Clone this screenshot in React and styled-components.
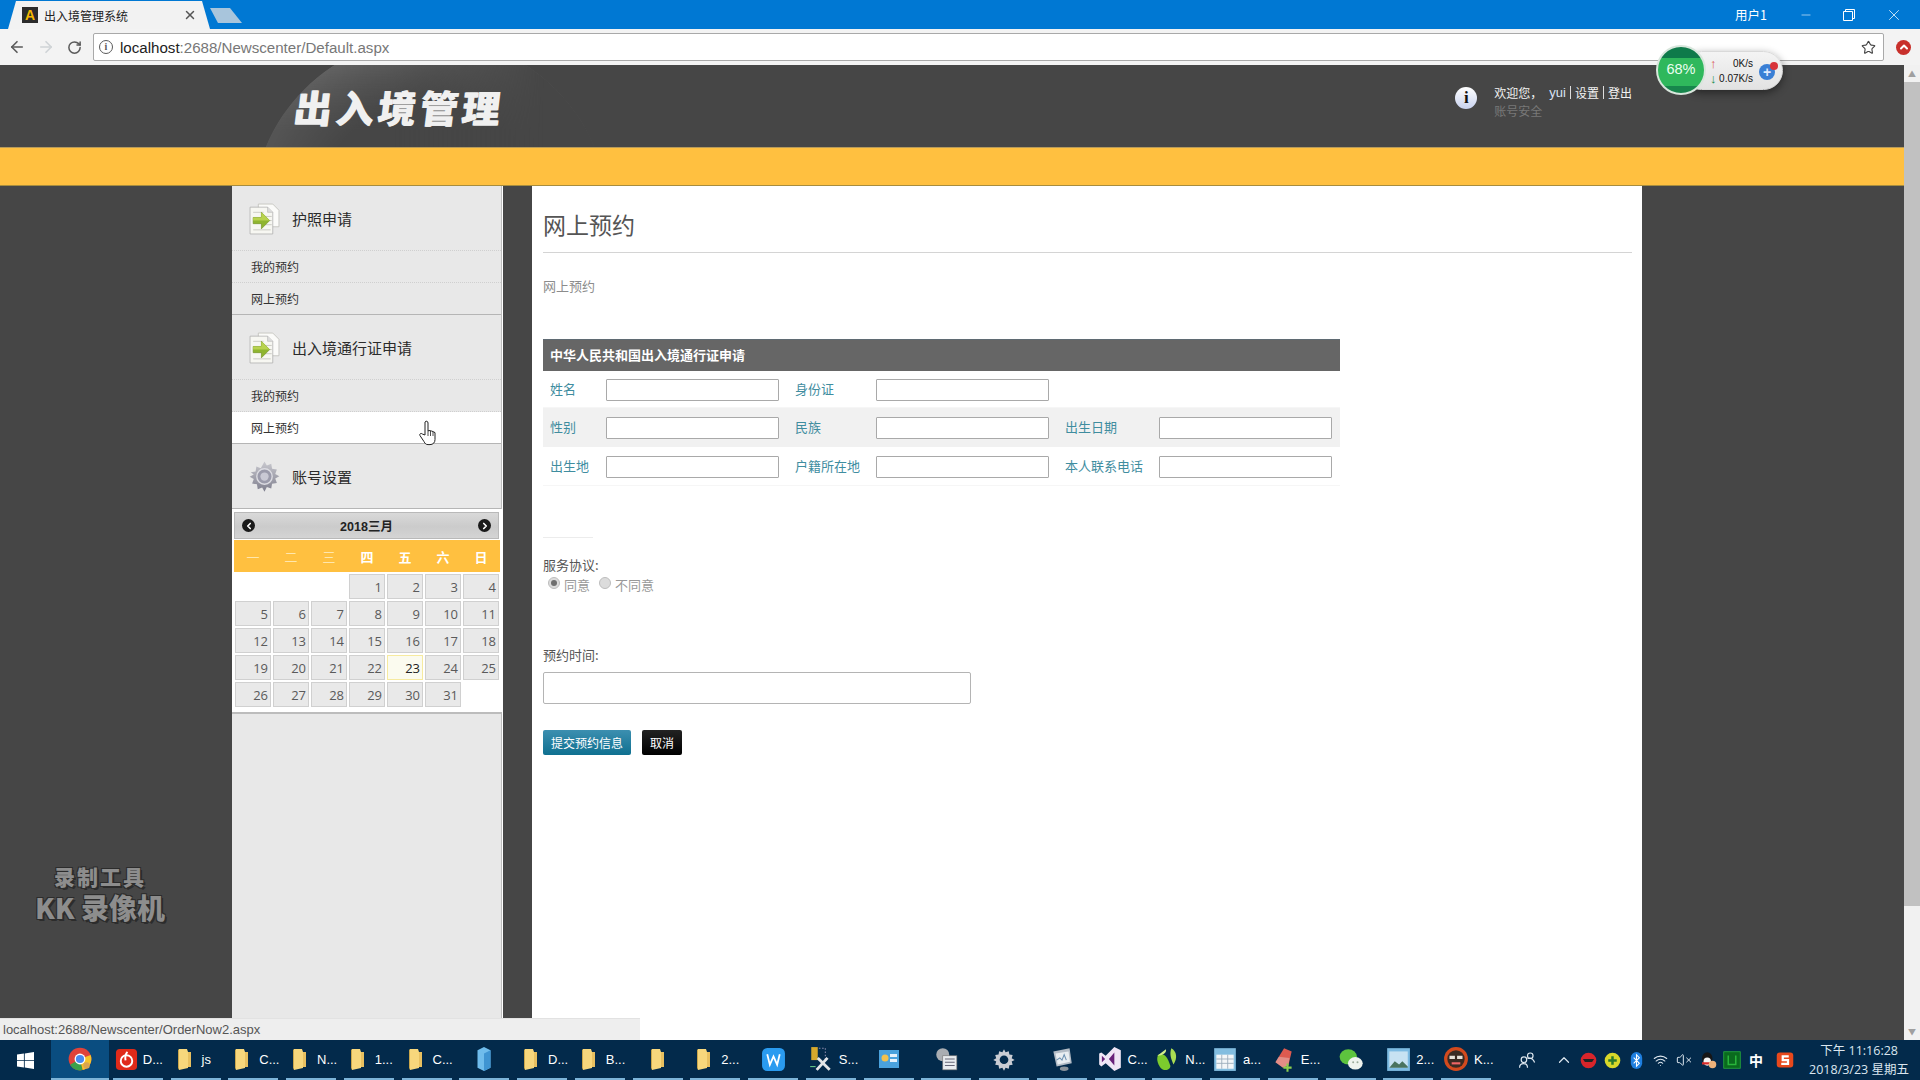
import React from "react";
import styled, { createGlobalStyle } from "styled-components";
import { ArrowLeft, ArrowRight, RotateCw, Star, X, Minus, ChevronUp, ChevronLeft, ChevronRight, Wifi, VolumeX } from "lucide-react";

const CJK = `"Noto Sans CJK SC", "Noto Sans", sans-serif`;
const LATIN = `"Open Sans", "Noto Sans CJK SC", sans-serif`;

const Global = createGlobalStyle`
  html, body { margin: 0; padding: 0; background: #464646; }
  * { box-sizing: border-box; }
  #root { width: 1920px; height: 1080px; overflow: hidden; }
`;

const Screen = styled.div`
  position: relative; width: 1920px; height: 1080px; display: flex; flex-direction: column;
  font-family: ${CJK}; overflow: hidden;
`;

/* ---------- browser chrome ---------- */
const TabStrip = styled.div`
  height: 29px; background: #0078d3; display: flex; align-items: flex-end; flex: none;
  padding-left: 8px; color: #fff;
`;
const Tab = styled.div`
  width: 202px; height: 28px; background: #f2f2f2; display: flex; align-items: center;
  clip-path: polygon(0 100%, 8px 0, 194px 0, 100% 100%); padding-left: 14px; color: #222; font-size: 12px;
`;
const Favicon = styled.span`
  width: 16px; height: 16px; background: #2b2b2b; color: #f5b800; font: bold 14px/16px "Liberation Sans", sans-serif;
  text-align: center; margin-right: 6px; flex: none;
`;
const TabTitle = styled.span` flex: 1; white-space: nowrap; `;
const TabClose = styled.span` display: flex; margin-right: 13px; color: #555; `;
const NewTab = styled.div`
  width: 32px; height: 15px; background: #a8c5dc; margin: 0 0 6px 0;
  clip-path: polygon(0 0, 20px 0, 100% 100%, 8px 100%); flex: none;
`;
const StripSpacer = styled.div` flex: 1; `;
const UserName = styled.span` font-size: 12.5px; align-self: center; margin-right: 32px; white-space: nowrap; `;
const WinBtns = styled.div` display: flex; align-self: center; gap: 29px; margin-right: 17px; align-items: center; `;
const RestoreIcon = styled.svg` width: 14px; height: 14px; fill: none; stroke: #fff; stroke-width: 1; `;

const Toolbar = styled.div`
  height: 36px; background: #f3f3f3; display: flex; align-items: center; flex: none; padding-left: 2px;
`;
const NavBtn = styled.span` width: 29px; display: flex; justify-content: center; color: ${p => p.$off ? "#cfd3d6" : "#5a5a5a"}; `;
const Omnibox = styled.div`
  margin-left: 4px; width: 1791px; height: 28px; background: #fff; border: 1px solid #a9a9a9; border-radius: 2px;
  display: flex; align-items: center; padding: 0 7px 0 1px; font: 15.1px "Liberation Sans", sans-serif; color: #777;
`;
const InfoDot = styled.span`
  width: 14px; height: 14px; border-radius: 50%; border: 1.6px solid #5a5a5a; color: #5a5a5a;
  font: bold 10px/11px "Liberation Serif", serif; text-align: center; margin: 0 7px 0 4px; flex: none;
`;
const Host = styled.span` color: #222; `;
const UrlGrow = styled.span` flex: 1; `;
const ExtBtn = styled.span`
  margin-left: 12px; width: 15px; height: 15px; border-radius: 50%; background: #c8302b; color: #fff;
  display: flex; align-items: center; justify-content: center; flex: none;
`;

/* ---------- page ---------- */
const Viewport = styled.div` flex: 1; display: flex; min-height: 0; `;
const PageCol = styled.div` flex: 1; display: flex; flex-direction: column; min-width: 0; background: #464646; `;

const SiteHeader = styled.header`
  position: relative; height: 82px; flex: none; background: #464646; overflow: hidden;
  display: flex; align-items: flex-start; padding-left: 294px;
  &::before {
    content: ""; position: absolute; left: 252px; top: -28px; width: 356px; height: 356px; border-radius: 50%;
    background: radial-gradient(circle closest-side, #464646 62%, #686868 100%);
    -webkit-mask-image: linear-gradient(to right, #000 40%, transparent 82%), linear-gradient(to bottom, #000 0, rgba(0,0,0,.45) 26%);
    mask-image: linear-gradient(to right, #000 40%, transparent 82%), linear-gradient(to bottom, #000 0, rgba(0,0,0,.45) 26%);
    -webkit-mask-composite: source-in;
    mask-composite: intersect;
  }
`;
const Logo = styled.div`
  position: relative; font-family: ${CJK}; font-weight: 900; font-size: 38px; line-height: 46px; letter-spacing: 4px;
  color: #f0f0f0; margin-top: 19px; white-space: nowrap; transform: skewX(-7deg); text-shadow: 1px 0 0 #f0f0f0;
`;
const UserBox = styled.div`
  margin-left: auto; margin-right: 272px; margin-top: 19px; display: flex; gap: 17px; font-size: 12px; color: #f2f2f2;
`;
const BigInfo = styled.span`
  width: 22px; height: 22px; margin-top: 3px; border-radius: 50%; background: linear-gradient(#fff, #c8d2ef); color: #111;
  font: bold 17px/22px "Liberation Serif", serif; text-align: center; flex: none;
`;
const UserLines = styled.div` display: flex; flex-direction: column; gap: 1px; `;
const UserLine = styled.div`
  display: flex; height: 17px; line-height: 17px; align-items: center; white-space: nowrap;
`;
const UserSep = styled.i` width: 1px; height: 13px; background: #ddd; margin: 0 4px; `;
const UserNameText = styled.b` font: 400 13px "Liberation Sans", sans-serif; color: #d8e2f2; margin-left: 7px; `;
const SafeLine = styled.div` color: #787878; font-size: 12px; line-height: 18px; `;

const YellowBar = styled.div`
  height: 39px; flex: none; background: #ffc040; border-top: 1px solid #b79b5a; border-bottom: 1px solid #a78d3f;
`;
const Body = styled.div` flex: 1; display: flex; padding-left: 232px; gap: 30px; min-height: 0; `;

const Sidebar = styled.aside`
  width: 270px; flex: none; background: #e8e8e8; border-right: 1px solid #bdbdbd; box-shadow: 1px 0 0 #fff;
  display: flex; flex-direction: column;
`;
const SideHead = styled.div`
  height: 65px; flex: none; display: flex; align-items: center; padding-left: 16px; gap: 11px; font-size: 15px; color: #2b2b2b;
  border-bottom: 1px ${p => p.$solid ? "solid #b5b5b5" : "dotted #cfcfcf"};
`;
const SideItem = styled.div`
  height: 32px; flex: none; display: flex; align-items: center; padding-left: 19px; font-size: 12px; color: #333;
  background: ${p => p.$active ? "#fff" : "transparent"};
  border-bottom: 1px ${p => p.$last ? "solid #b5b5b5" : "dotted #cfcfcf"};
`;

const Calendar = styled.div`
  height: 205px; flex: none; background: #fff; padding: 3px 3px 0 2px; border-bottom: 2px solid #bcbcbc;
  margin-right: -1px;
`;
const CalTitle = styled.div`
  height: 27px; background: linear-gradient(#d9d9d9, #cbcbcb 55%, #d4d4d4); border: 1px solid #b9b9b9;
  display: flex; align-items: center; justify-content: space-between; padding: 0 7px; font-size: 12.5px; font-weight: 700; color: #222;
`;
const CalArrow = styled.span`
  width: 13px; height: 13px; border-radius: 50%; background: #1a1a1a; color: #fff; display: flex; align-items: center; justify-content: center;
`;
const CalYear = styled.span` font-family: "Liberation Sans", ${CJK}; `;
const CalDow = styled.div`
  margin-top: 1px; height: 32px; background: #ffc040; display: grid; grid-template-columns: repeat(7, 38px); align-items: center;
  justify-items: center; font-size: 13px; font-weight: 700; width: 266px;
`;
const Dow = styled.span` color: ${p => p.$faint ? "#ffe7ad" : "#fff"}; font-weight: ${p => p.$faint ? 400 : 700}; `;
const CalGrid = styled.div`
  margin: 2px 0 0 1px; display: grid; grid-template-columns: repeat(7, 36px); grid-auto-rows: 25px; column-gap: 2px; row-gap: 2px;
`;
const Day = styled.div`
  border: 1px solid ${p => p.$today ? "#f6ea9f" : "#d0d0d0"}; background: ${p => p.$today ? "#fbfbef" : "#e9e9e9"};
  font: 13px/24px ${LATIN}; color: ${p => p.$today ? "#222" : "#5a5a5a"}; text-align: right; padding-right: 2px;
`;
const DayGap = styled.div``;

const Main = styled.main`
  width: 1110px; flex: none; background: #fff; padding: 23px 10px 0 11px; display: flex; flex-direction: column; font-size: 13px;
`;
const PageTitle = styled.h1` margin: 0; font-size: 23px; line-height: 30px; font-weight: 400; color: #555; `;
const TitleRule = styled.div` height: 1px; background: #d4d4d4; margin-top: 13px; `;
const Crumb = styled.div` margin-top: 23px; line-height: 20px; color: #8c8c8c; font-size: 13px; `;
const FormTable = styled.div` width: 797px; margin-top: 43px; `;
const TableHead = styled.div`
  height: 32px; background: #666; color: #fff; font-weight: 700; font-size: 13px; line-height: 29px; padding-left: 7px;
  border-top: 1px solid #5f6a72;
`;
const Row = styled.div`
  display: grid; grid-template-columns: 63px 173px 97px 173px 110px 173px; align-items: center;
  padding: ${p => p.$pad}; background: ${p => p.$shade ? "#f1f1f1" : "#fff"}; border-bottom: ${p => p.$shade ? "0" : "1px solid #f6f6f6"};
`;
const FieldLabel = styled.label`
  padding: 0 0 2px ${p => p.$first ? 7 : 16}px; color: #3f8d9f; font-size: 13px; line-height: 20px; white-space: nowrap;
`;
const TextInput = styled.input`
  height: 22px; width: 173px; border: 1px solid #a9a9a9; border-radius: 1px; background: #fff; padding: 0 4px; outline: 0;
`;
const ShortRule = styled.div` width: 50px; height: 1px; background: #ececec; margin-top: 51px; `;
const FieldTitle = styled.div` font-size: 13px; line-height: 18px; color: #555; margin-top: ${p => p.$top}px; `;
const RadioRow = styled.div` display: flex; align-items: center; height: 20px; color: #999; font-size: 13px; margin-left: 5px; `;
const Radio = styled.span`
  width: 12px; height: 12px; border-radius: 50%; border: 1px solid #bdbdbd; background: #dcdcdc; margin: -3px 4px 0 0; flex: none;
  display: flex; align-items: center; justify-content: center;
  &::after { content: ""; width: 6px; height: 6px; border-radius: 50%; background: ${p => p.$on ? "#707070" : "transparent"}; }
`;
const RadioText = styled.span` margin-right: 9px; `;
const WideInput = styled.input`
  display: block; width: 428px; height: 32px; margin-top: 8px; border: 1px solid #b4b4b4; border-radius: 2px; background: #fff; outline: 0;
`;
const Buttons = styled.div` display: flex; gap: 11px; margin-top: 26px; `;
const Button = styled.button`
  height: 25px; width: ${p => p.$w}px; border: 0; border-radius: 2px; color: #fff; font: 12px ${CJK}; padding: 0;
  background: ${p => p.$dark ? "linear-gradient(#222, #000)" : "linear-gradient(#3c8fb0, #0f7090)"};
`;

const Scrollbar = styled.div`
  width: 16px; flex: none; background: #f1f1f1; display: flex; flex-direction: column; align-items: center;
`;
const ScrollArrow = styled.span`
  height: 17px; flex: none; width: 100%; display: flex; align-items: center; justify-content: center; color: #a0a0a0; font-size: 8px; line-height: 1;
`;
const Thumb = styled.div` width: 100%; height: 824px; background: #c1c1c1; flex: none; `;
const ScrollFill = styled.div` flex: 1; `;

/* ---------- overlays ---------- */
const StatusBubble = styled.div`
  position: absolute; left: 0; bottom: 40px; width: 640px; height: 22px; background: #eeeeee; border-top: 1px solid #e2e2e2;
  font: 13px/22px "Liberation Sans", sans-serif; color: #555; padding-left: 3px;
`;
const Watermark = styled.div`
  position: absolute; left: 33px; top: 861px; width: 134px; text-align: center; color: #8d8d8d; font-weight: 900;
  text-shadow: -1px -1px 0 #2c2c2c, 1px -1px 0 #2c2c2c, -1px 1px 0 #2c2c2c, 2px 2px 0 #2c2c2c;
`;
const MarkTop = styled.div` font-size: 21px; line-height: 30px; letter-spacing: 2px; `;
const MarkBottom = styled.div` font-size: 28px; line-height: 32px; white-space: nowrap; `;
const CursorBox = styled.svg` position: absolute; left: 419px; top: 420px; width: 20px; height: 26px; `;

const NetWidget = styled.div`
  position: absolute; left: 1656px; top: 45px; width: 128px; height: 50px;
`;
const NetPill = styled.div`
  position: absolute; left: 26px; top: 6px; width: 101px; height: 39px; border-radius: 20px; background: linear-gradient(#f4f4f4, #e2e2e2);
  box-shadow: 0 3px 8px rgba(0,0,0,.45); border: 1px solid #d9d9d9;
`;
const NetRate = styled.div`
  position: absolute; right: 29px; top: ${p => p.$top}px; font: 400 10px/12px "Liberation Sans", sans-serif; color: #111; white-space: nowrap;
`;
const NetArrow = styled.span`
  position: absolute; left: 27px; top: ${p => p.$top}px; font: 700 13px/12px "Liberation Sans", sans-serif; color: ${p => p.$c};
`;
const NetPlus = styled.div`
  position: absolute; right: 7px; top: 12px; width: 16px; height: 16px; border-radius: 50%; background: #3a7fd5; color: #dfeaff;
  font: 700 14px/16px "Liberation Sans", sans-serif; text-align: center;
`;
const NetDot = styled.div`
  position: absolute; right: 4px; top: 10px; width: 8px; height: 8px; border-radius: 50%; background: #d8343a;
`;
const NetBall = styled.div`
  position: absolute; left: 0; top: 0; width: 50px; height: 50px; border-radius: 50%; border: 2px solid #d8e6dc;
  background: linear-gradient(#0e7a4a 0 24%, #2fb85c 24% 84%, #17864c 84%);
  color: #eafff0; font: 14.5px/44px "Liberation Sans", sans-serif; text-align: center;
`;

/* ---------- taskbar ---------- */
const Taskbar = styled.div`
  height: 40px; flex: none; background: #032a4b; display: flex; color: #fff; font-size: 13px;
`;
const StartBtn = styled.div` width: 51px; flex: none; display: flex; align-items: center; justify-content: center; `;
const TaskItems = styled.div` display: flex; gap: 7.75px; flex: none; `;
const TaskItem = styled.div`
  width: ${p => p.$active ? 58 : 50}px; height: 40px; flex: none; display: flex; align-items: center;
  margin-right: ${p => p.$active ? -4 : 0}px;
  justify-content: ${p => p.$label ? "flex-start" : "center"}; padding-left: ${p => p.$label ? 2 : 0}px; gap: 5px;
  border-bottom: 2px solid #7db4d8; background: ${p => p.$active ? "#0a4d80" : "transparent"};
  font: 13px "Liberation Sans", sans-serif;
`;
const Tray = styled.div` margin-left: auto; display: flex; align-items: center; height: 40px; `;
const TrayIcon = styled.span` width: ${p => p.$w || 24}px; display: flex; justify-content: center; align-items: center; color: #dfe8f0; `;
const TrayText = styled.span` font-size: 14px; color: #fff; font-weight: 700; `;
const Clock = styled.div`
  width: 112px; margin-left: 6px; display: flex; flex-direction: column; align-items: flex-end; padding-right: 11px; font: 12.5px/19px ${LATIN}; color: #dbe6ef;
`;
const ClockTop = styled.span` margin-right: 11px; white-space: nowrap; `;
const ClockBottom = styled.span` white-space: nowrap; `;

/* ---------- drawn icons ---------- */
const Svg = styled.svg` flex: none; `;
const Ico = ({ s = 26, children, vb = "0 0 24 24" }) => (
  <Svg width={s} height={s} viewBox={vb}>{children}</Svg>
);
const Folder = () => (
  <Ico s={24}>
    <path d="M6 2h8l1 3v16l-9 2z" fill="#f7d77c" />
    <path d="M6 2l-1 1v18l1 2z" fill="#c9a64c" />
    <path d="M15 5h3v15h-3z" fill="#e8c060" />
  </Ico>
);
const ChromeIco = () => (
  <Ico s={26}>
    <circle cx="12" cy="12" r="10.5" fill="#e0433a" />
    <path d="M12 12L2.9 17.2A10.5 10.5 0 0 0 14.5 22.2z" fill="#3ba14a" />
    <path d="M12 12L21.8 8.2A10.5 10.5 0 0 1 14.5 22.2z" fill="#f6c52a" />
    <circle cx="12" cy="12" r="5" fill="#fff" /><circle cx="12" cy="12" r="3.8" fill="#4a8bef" />
    <circle cx="18" cy="18" r="3" fill="#d9a450" />
  </Ico>
);
const Netease = () => (
  <Ico s={23}>
    <rect x="1" y="1" width="22" height="22" rx="4" fill="#e02a1a" />
    <circle cx="12" cy="13.5" r="6" fill="none" stroke="#fff" strokeWidth="2" />
    <path d="M13 4c-1 1-3 3-2 9" fill="none" stroke="#fff" strokeWidth="2" />
  </Ico>
);
const BlueBook = () => (
  <Ico s={26}><path d="M6 4l6-3 6 3v16l-6 3-6-3z" fill="#6fbcec" /><path d="M12 7v16l6-3V4z" fill="#3f94d2" /></Ico>
);
const WIco = () => (
  <Ico s={25}><rect x="1" y="1" width="22" height="22" rx="5" fill="#2a9bf0" /><path d="M6 7l2.500 10L12 9l3.500 8L18 7" fill="none" stroke="#fff" strokeWidth="1.7" /></Ico>
);
const Tools = () => (
  <Ico s={26}>
    <rect x="3" y="1" width="6" height="12" fill="#d7a92c" />
    <path d="M10 2h6v10" fill="none" stroke="#88a" strokeWidth="1" strokeDasharray="1.5 1.5" />
    <path d="M8 22L18 11M9 11l11 11" stroke="#e3e6e9" strokeWidth="2.6" />
    <path d="M2 19h5" stroke="#6c8" strokeWidth="1" />
  </Ico>
);
const CardIco = () => (
  <Ico s={24}><rect x="2" y="3" width="20" height="18" fill="#4aa2dd" /><circle cx="8" cy="11" r="3.5" fill="#f2c14e" /><path d="M13 7h7v3h-7zM13 12h7v3h-7z" fill="#e6f2fb" /></Ico>
);
const Cog = ({ s = 24, c = "#c9ccd3", hole = "#032a4b" }) => (
  <Ico s={s}>
    <path d="M12 2l1.600 3 3.300-1 .6 3.400 3.400.6-1 3.300 3 1.700-3 1.600 1 3.300-3.400.6-.6 3.400-3.300-1L12 24l-1.700-3.100-3.300 1-.6-3.400-3.400-.6 1-3.300-3-1.600 3-1.700-1-3.300 3.400-.6.6-3.400 3.300 1z" fill={c} transform="translate(1.2 1.2) scale(.9)" />
    <circle cx="12" cy="12.7" r="4" fill={hole} />
  </Ico>
);
const SettingDoc = () => (
  <Ico s={26}><circle cx="9" cy="8" r="6" fill="#a9adb2" /><rect x="9" y="9" width="13" height="13" fill="#e9ecef" stroke="#777" strokeWidth=".6" /><path d="M11 12h9M11 15h9M11 18h9" stroke="#667" strokeWidth="1" /></Ico>
);
const MonitorIco = () => (
  <Ico s={26}><path d="M4 5l15-3 2 14-14 3z" fill="#b3bcc6" /><path d="M6 7l12-2 1.400 9.500L8 17z" fill="#e8edf1" /><path d="M7 13l3-2 2 2 2-5 2 5" stroke="#6a8fb0" fill="none" /><ellipse cx="14" cy="21" rx="4" ry="2" fill="#8a939b" /></Ico>
);
const VSIco = () => (
  <Ico s={26}><path d="M16 1l6 3v16l-6 3-8-7-4 3-2-2V7l2-1 4 3z" fill="#efe6f6" /><path d="M16 6v12l-5-6zM4.500 9l3 3-3 3z" fill="#68217a" /></Ico>
);
const Leaf = () => (
  <Ico s={26}><path d="M16 2c5 3 6 9 2 15-2-5-4-9-2-15z" fill="#a9dc52" /><path d="M4 8c4-2 8 0 11 10 1 4-6 6-9 2C3 16 2 11 4 8z" fill="#7ccb2d" /><path d="M3 9l8-6c1 3-3 6-8 6z" fill="#d2ef8b" /></Ico>
);
const TableIco = () => (
  <Ico s={26}><rect x="2" y="2" width="20" height="21" fill="#82bde0" /><rect x="4" y="8" width="16" height="13" fill="#f3f6f8" /><path d="M4 12h16M4 16h16M9 8v13M14.500 8v13" stroke="#9ab" strokeWidth=".8" /></Ico>
);
const Eraser = () => (
  <Ico s={26}><path d="M5 15L13 2l7 3-3 13-5 2z" fill="#dd5a50" /><path d="M5 15l3-5 10 1-1 7-5 2z" fill="#eee" opacity=".35" /><path d="M13 21h8M17 17v8" stroke="#8bcf4f" strokeWidth="2" transform="scale(.95)" /></Ico>
);
const WeChat = () => (
  <Ico s={26}><ellipse cx="9.5" cy="10" rx="8" ry="7" fill="#5dc43e" /><ellipse cx="16" cy="16" rx="6.8" ry="5.8" fill="#eff3ee" /><circle cx="14" cy="15" r=".9" fill="#9a9" /><circle cx="18" cy="15" r=".9" fill="#9a9" /></Ico>
);
const Picture = () => (
  <Ico s={26}><rect x="2" y="2" width="21" height="21" fill="#7dbbe2" /><rect x="4" y="5" width="17" height="15" fill="#c7e2f2" /><path d="M4 20l5-6 4 3 3-3 5 5v1z" fill="#49735f" /></Ico>
);
const KKIco = () => (
  <Ico s={26}><circle cx="12" cy="12" r="11" fill="#d24a1e" /><circle cx="12" cy="12" r="8" fill="#3a2a22" /><path d="M6 9h5v3H6zM13 9h5v3h-5z" fill="#e8e0d8" /><path d="M8 16h8" stroke="#e66" strokeWidth="2" /></Ico>
);
const DocArrow = () => (
  <Ico s={33} vb="0 0 30 32">
    <path d="M9 2h14l6 6v16H9z" fill="#fbfbf9" stroke="#b9b9b3" strokeWidth=".7" />
    <path d="M1 5h17l5 5v21H1z" fill="#f7f7f2" stroke="#aaa" strokeWidth=".7" />
    <path d="M18 5v5h5" fill="#ddd" stroke="#aaa" strokeWidth=".5" />
    <path d="M15 14h7M15 18h7M15 22h7M4 27h17M4 10h10" stroke="#c4c4bc" strokeWidth=".8" />
    <path d="M4 15h8v-5l8 8-8 8v-5H4z" fill="#8fb52e" stroke="#6e8f1f" strokeWidth=".6" />
    <path d="M4 15h8v-5l8 8H4z" fill="#b8d24e" />
  </Ico>
);
const SideGear = () => (
  <Ico s={33} vb="0 0 24 24">
    <defs><linearGradient id="sg" x1="0" y1="0" x2="0" y2="1"><stop offset="0" stopColor="#c9c9cf" /><stop offset="1" stopColor="#7f7f8e" /></linearGradient></defs>
    <path d="M12 1l1.700 3 3.200-1.200.6 3.500 3.500.6-1.200 3.200 3 1.700-3 1.700 1.200 3.200-3.500.6-.6 3.500-3.200-1.200L12 23l-1.700-3-3.200 1.200-.6-3.500-3.500-.6 1.200-3.200-3-1.700 3-1.700L2 8.900l3.500-.6.6-3.500 3.200 1.200z" fill="url(#sg)" />
    <circle cx="12" cy="12" r="5.600" fill="#9b9bab" stroke="#dcdce2" strokeWidth="1" />
    <circle cx="12" cy="12" r="3" fill="#c9c9d4" />
  </Ico>
);
const WinLogo = () => (
  <Ico s={17} vb="0 0 16 16"><path d="M0 2.300L6.500 1.400v6.100H0zM7.300 1.300L16 0v7.500H7.300zM0 8.300h6.500v6.200L0 13.600zM7.300 8.300H16V16l-8.700-1.300z" fill="#fff" /></Ico>
);
const People = () => (
  <Ico s={19}>
    <g fill="none" stroke="#dfe8f0" strokeWidth="1.5">
      <circle cx="15.500" cy="6" r="3.500" /><circle cx="7.500" cy="11" r="3.500" />
      <path d="M2 21c0-3 2-5 5-5s5 2 5 5" /><path d="M12 9.500c3-1 7 0 9 5" />
    </g>
  </Ico>
);

const folderTask = (label) => ({ icon: <Folder />, label });
const tasks = [
  { icon: <ChromeIco />, active: true },
  { icon: <Netease />, label: "D..." },
  folderTask("js"), folderTask("C..."), folderTask("N..."), folderTask("1..."), folderTask("C..."),
  { icon: <BlueBook /> },
  folderTask("D..."), folderTask("B..."), { icon: <Folder /> }, folderTask("2..."),
  { icon: <WIco /> },
  { icon: <Tools />, label: "S..." },
  { icon: <CardIco /> }, { icon: <SettingDoc /> }, { icon: <Cog s={26} /> }, { icon: <MonitorIco /> },
  { icon: <VSIco />, label: "C..." }, { icon: <Leaf />, label: "N..." }, { icon: <TableIco />, label: "a..." },
  { icon: <Eraser />, label: "E..." }, { icon: <WeChat /> }, { icon: <Picture />, label: "2..." }, { icon: <KKIco />, label: "K..." },
];

const weeks = [
  [null, null, null, 1, 2, 3, 4], [5, 6, 7, 8, 9, 10, 11], [12, 13, 14, 15, 16, 17, 18],
  [19, 20, 21, 22, 23, 24, 25], [26, 27, 28, 29, 30, 31, null],
];
const dows = ["一", "二", "三", "四", "五", "六", "日"];

export default function App() {
  return (
    <Screen>
      <Global />
      <TabStrip>
        <Tab>
          <Favicon>A</Favicon>
          <TabTitle>出入境管理系统</TabTitle>
          <TabClose><X size={14} strokeWidth={2.5} /></TabClose>
        </Tab>
        <NewTab />
        <StripSpacer />
        <UserName>用户1</UserName>
        <WinBtns>
          <Minus size={14} strokeWidth={1} />
          <RestoreIcon viewBox="0 0 14 14"><path d="M3.500 3.500V1.500h9v9h-2M1.500 3.500h9v9h-9z" /></RestoreIcon>
          <X size={18} strokeWidth={1} />
        </WinBtns>
      </TabStrip>
      <Toolbar>
        <NavBtn><ArrowLeft size={18} strokeWidth={2.2} /></NavBtn>
        <NavBtn $off><ArrowRight size={18} strokeWidth={2.2} /></NavBtn>
        <NavBtn><RotateCw size={15} strokeWidth={2.4} /></NavBtn>
        <Omnibox>
          <InfoDot>i</InfoDot>
          <Host>localhost</Host>:2688/Newscenter/Default.aspx
          <UrlGrow />
          <Star size={15} color="#444" strokeWidth={1.8} />
        </Omnibox>
        <ExtBtn><ChevronUp size={12} strokeWidth={4} /></ExtBtn>
      </Toolbar>

      <Viewport>
        <PageCol>
          <SiteHeader>
            <Logo>出入境管理</Logo>
            <UserBox>
              <BigInfo>i</BigInfo>
              <UserLines>
                <UserLine>欢迎您， <UserNameText>yui</UserNameText><UserSep />设置<UserSep />登出</UserLine>
                <SafeLine>账号安全</SafeLine>
              </UserLines>
            </UserBox>
          </SiteHeader>
          <YellowBar />
          <Body>
            <Sidebar>
              <SideHead><DocArrow />护照申请</SideHead>
              <SideItem>我的预约</SideItem>
              <SideItem $last>网上预约</SideItem>
              <SideHead><DocArrow />出入境通行证申请</SideHead>
              <SideItem>我的预约</SideItem>
              <SideItem $active $last>网上预约</SideItem>
              <SideHead $solid><SideGear />账号设置</SideHead>
              <Calendar>
                <CalTitle>
                  <CalArrow><ChevronLeft size={10} strokeWidth={4} /></CalArrow>
                  <CalYear>2018三月</CalYear>
                  <CalArrow><ChevronRight size={10} strokeWidth={4} /></CalArrow>
                </CalTitle>
                <CalDow>
                  {dows.map((d, i) => <Dow key={d} $faint={i < 3}>{d}</Dow>)}
                </CalDow>
                <CalGrid>
                  {weeks.flat().map((d, i) => d
                    ? <Day key={i} $today={d === 23}>{d}</Day>
                    : <DayGap key={i} />)}
                </CalGrid>
              </Calendar>
            </Sidebar>
            <Main>
              <PageTitle>网上预约</PageTitle>
              <TitleRule />
              <Crumb>网上预约</Crumb>
              <FormTable>
                <TableHead>中华人民共和国出入境通行证申请</TableHead>
                <Row $pad="8px 0 6px">
                  <FieldLabel $first>姓名</FieldLabel><TextInput />
                  <FieldLabel>身份证</FieldLabel><TextInput />
                </Row>
                <Row $pad="9px 0 8px" $shade>
                  <FieldLabel $first>性别</FieldLabel><TextInput />
                  <FieldLabel>民族</FieldLabel><TextInput />
                  <FieldLabel>出生日期</FieldLabel><TextInput />
                </Row>
                <Row $pad="9px 0 7px">
                  <FieldLabel $first>出生地</FieldLabel><TextInput />
                  <FieldLabel>户籍所在地</FieldLabel><TextInput />
                  <FieldLabel>本人联系电话</FieldLabel><TextInput />
                </Row>
              </FormTable>
              <ShortRule />
              <FieldTitle $top={18}>服务协议:</FieldTitle>
              <RadioRow>
                <Radio $on /><RadioText>同意</RadioText>
                <Radio /><RadioText>不同意</RadioText>
              </RadioRow>
              <FieldTitle $top={52}>预约时间:</FieldTitle>
              <WideInput />
              <Buttons>
                <Button $w={88}>提交预约信息</Button>
                <Button $w={40} $dark>取消</Button>
              </Buttons>
            </Main>
          </Body>
        </PageCol>
        <Scrollbar>
          <ScrollArrow>▲</ScrollArrow>
          <Thumb />
          <ScrollFill />
          <ScrollArrow>▼</ScrollArrow>
        </Scrollbar>
      </Viewport>

      <Taskbar>
        <StartBtn><WinLogo /></StartBtn>
        <TaskItems>
          {tasks.map((t, i) => (
            <TaskItem key={i} $label={!!t.label} $active={t.active}>
              {t.icon}{t.label}
            </TaskItem>
          ))}
        </TaskItems>
        <Tray>
          <TrayIcon $w={50}><People /></TrayIcon>
          <TrayIcon><ChevronUp size={18} strokeWidth={1.6} /></TrayIcon>
          <TrayIcon><Ico s={17}><circle cx="12" cy="12" r="11" fill="#d8252b" /><path d="M4 10h16l-3 4H7z" fill="#222" /></Ico></TrayIcon>
          <TrayIcon><Ico s={17}><circle cx="12" cy="12" r="11" fill="#d8d82a" /><path d="M12 6v12M6 12h12" stroke="#2a7a2a" strokeWidth="3.5" /></Ico></TrayIcon>
          <TrayIcon><Ico s={17}><rect x="4" y="0" width="16" height="24" rx="8" fill="#1e7fe0" /><path d="M8 8l8 8-4 4V4l4 4-8 8" fill="none" stroke="#fff" strokeWidth="1.5" /></Ico></TrayIcon>
          <TrayIcon><Wifi size={15} strokeWidth={1.7} /></TrayIcon>
          <TrayIcon><VolumeX size={16} strokeWidth={1.5} /></TrayIcon>
          <TrayIcon><Ico s={18}><ellipse cx="11" cy="10" rx="7" ry="8.500" fill="#161616" /><ellipse cx="11" cy="14" rx="5" ry="5.500" fill="#f3f3f3" /><path d="M4 15h15v3H4z" fill="#d82a2a" /><circle cx="18" cy="18" r="5" fill="#eeb27a" /></Ico></TrayIcon>
          <TrayIcon><Ico s={18}><rect x="1" y="1" width="22" height="22" fill="#0a6a1e" stroke="#29b53b" /><path d="M7 6v12h10V6" fill="none" stroke="#29b53b" strokeWidth="2" /></Ico></TrayIcon>
          <TrayIcon><TrayText>中</TrayText></TrayIcon>
          <TrayIcon $w={34}><Ico s={18}><rect x="1" y="2" width="22" height="20" rx="4" fill="#e8481c" /><path d="M17 7H9v5h7v5H7" fill="none" stroke="#fff" strokeWidth="3" /></Ico></TrayIcon>
          <Clock>
            <ClockTop>下午 11:16:28</ClockTop>
            <ClockBottom>2018/3/23 星期五</ClockBottom>
          </Clock>
        </Tray>
      </Taskbar>

      <StatusBubble>localhost:2688/Newscenter/OrderNow2.aspx</StatusBubble>
      <Watermark>
        <MarkTop>录制工具</MarkTop>
        <MarkBottom>KK 录像机</MarkBottom>
      </Watermark>
      <CursorBox viewBox="0 0 20 26">
        <path d="M6 2c1-1.400 3-1 3 1v8l1-.5 1 .2 1.500.3 1.500.6 2 1v7c0 3-2 5-5 5H9c-2 0-3-1-4-3l-4-6c-1-1.500 1-3 2.500-1.500L6 15z" fill="#fff" stroke="#222" strokeWidth="1" />
        <path d="M9 11v5M11.500 11v5M14 12v4" stroke="#222" strokeWidth=".8" />
      </CursorBox>
      <NetWidget>
        <NetPill>
          <NetArrow $top={6} $c="#d9534f">↑</NetArrow>
          <NetRate $top={6}>0K/s</NetRate>
          <NetArrow $top={21} $c="#1e8f4e">↓</NetArrow>
          <NetRate $top={21}>0.07K/s</NetRate>
          <NetPlus>+</NetPlus>
          <NetDot />
        </NetPill>
        <NetBall>68%</NetBall>
      </NetWidget>
    </Screen>
  );
}
